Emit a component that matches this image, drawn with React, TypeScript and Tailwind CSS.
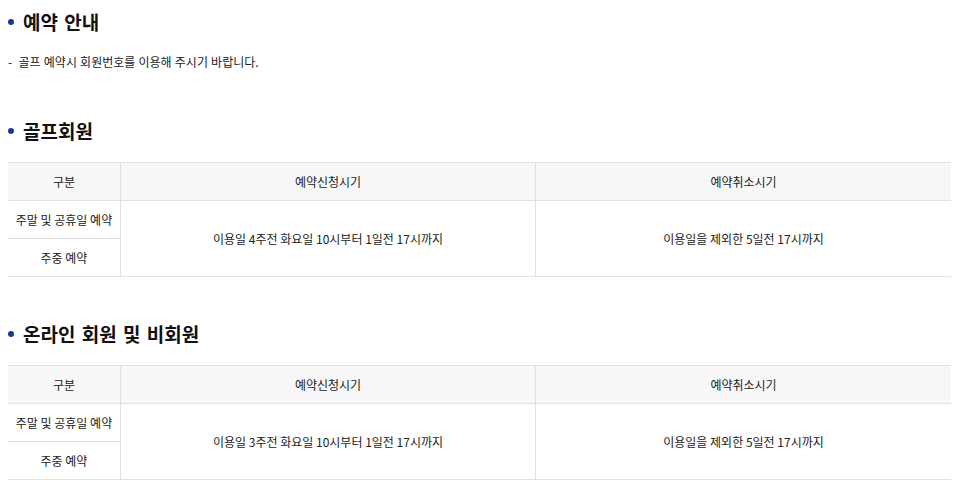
const font = "font-['Noto_Sans_CJK_KR','Noto_Sans',sans-serif]";

type Section = { title: string; apply: string; cancel: string };

const sections: Section[] = [
  {
    title: "골프회원",
    apply: "이용일 4주전 화요일 10시부터 1일전 17시까지",
    cancel: "이용일을 제외한 5일전 17시까지",
  },
  {
    title: "온라인 회원 및 비회원",
    apply: "이용일 3주전 화요일 10시부터 1일전 17시까지",
    cancel: "이용일을 제외한 5일전 17시까지",
  },
];

function Title({ children, className = "" }: { children: React.ReactNode; className?: string }) {
  return (
    <h2 className={`flex items-center gap-[9px] text-[19px] font-bold leading-[28px] text-[#111] [word-spacing:2px] ${className}`}>
      <span className="size-[6px] shrink-0 rounded-full bg-[#1b3a8c]" />
      {children}
    </h2>
  );
}

function Schedule({ s }: { s: Section }) {
  const head = "flex h-[38px] items-center justify-center border-b border-[#e1e1e1] bg-[#f7f7f7]";
  const cell = "flex items-center justify-center border-b border-[#e1e1e1]";
  return (
    <div className="mt-[17px] grid grid-cols-[113px_1fr_1fr] grid-rows-[38px_38px_38px] border-t border-[#e1e1e1] text-[12px] text-[#222]">
      <div className={`${head} border-r`}>구분</div>
      <div className={`${head} border-r`}>예약신청시기</div>
      <div className={head}>예약취소시기</div>
      <div className={`${cell} border-r`}>주말 및 공휴일 예약</div>
      <div className={`${cell} row-span-2 border-r`}>{s.apply}</div>
      <div className={`${cell} row-span-2`}>{s.cancel}</div>
      <div className={`${cell} border-r`}>주중 예약</div>
    </div>
  );
}

export default function App() {
  return (
    <div className={`${font} min-h-[489px] bg-white pb-2 pl-2 pr-[2px] pt-2`}>
      <Title>예약 안내</Title>
      <p className="mt-[17px] text-[12px] leading-[18px] text-[#222] [word-spacing:0.5px]">-&nbsp; 골프 예약시 회원번호를 이용해 주시기 바랍니다.</p>

      <Title className="mt-[46px]">{sections[0].title}</Title>
      <Schedule s={sections[0]} />

      <Title className="mt-[43px]">{sections[1].title}</Title>
      <Schedule s={sections[1]} />
    </div>
  );
}
